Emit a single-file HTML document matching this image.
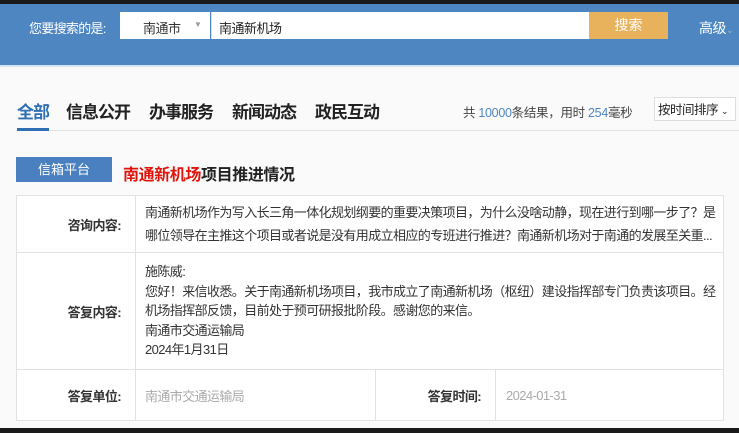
<html><head><style>
body{margin:0;width:739px;height:433px;overflow:hidden;background:#fafafa;font-family:"Liberation Sans","Noto Sans CJK SC",sans-serif;position:relative}
.a{position:absolute}
table{table-layout:fixed}
td{border:1px solid #e2e2e2;font-size:13px;letter-spacing:-0.6px;color:#333;box-sizing:border-box;overflow:hidden;white-space:nowrap}
</style></head><body>
<div class="a" style="left:0;top:0;width:739px;height:4px;background:#1a1a1a"></div>
<div class="a" style="left:0;top:4px;width:739px;height:61px;background:#4e86c2"></div>
<div class="a" style="left:29px;top:18px;color:#fff;font-size:13px;letter-spacing:-0.7px">您要搜索的是:</div>
<div class="a" style="left:120px;top:12px;width:90px;height:27px;background:#fff"></div>
<div class="a" style="left:143px;top:18px;font-size:13px;color:#333;letter-spacing:-0.5px">南通市</div>
<div class="a" style="left:194px;top:20px;font-size:8px;color:#999">▼</div>
<div class="a" style="left:211px;top:12px;width:378px;height:27px;background:#fff;border-left:1px solid #ddd"></div>
<div class="a" style="left:219px;top:18px;font-size:13px;color:#222;letter-spacing:-0.5px">南通新机场</div>
<div class="a" style="left:589px;top:12px;width:79px;height:27px;background:#e8b15c;color:#fff;font-size:14px;text-align:center;line-height:27px">搜索</div>
<div class="a" style="left:699px;top:18px;color:#fff;font-size:14px;letter-spacing:-0.5px">高级<span style="font-size:9px;color:#9bb">⌄</span></div>
<div class="a" style="left:0;top:65px;width:739px;height:2px;background:#d6e3f0"></div>
<div class="a" style="left:17px;top:98px;font-size:17px;font-weight:bold;color:#2f6fb3;letter-spacing:-1px">全部</div>
<div class="a" style="left:66px;top:98px;font-size:17px;font-weight:bold;color:#222;letter-spacing:-1px">信息公开</div>
<div class="a" style="left:149px;top:98px;font-size:17px;font-weight:bold;color:#222;letter-spacing:-1px">办事服务</div>
<div class="a" style="left:232px;top:98px;font-size:17px;font-weight:bold;color:#222;letter-spacing:-1px">新闻动态</div>
<div class="a" style="left:315px;top:98px;font-size:17px;font-weight:bold;color:#222;letter-spacing:-1px">政民互动</div>
<div class="a" style="left:17px;top:130px;width:722px;height:1px;background:#e4e4e4"></div>
<div class="a" style="left:17px;top:128px;width:32px;height:3px;background:#2f6fb3"></div>
<div class="a" style="left:463px;top:102px;font-size:12.5px;color:#444;letter-spacing:-0.3px">共 <span style="color:#4e86c2">10000</span>条结果，用时 <span style="color:#4e86c2">254</span>毫秒</div>
<div class="a" style="left:654px;top:97px;width:82px;height:24px;border:1px solid #ddd;background:#fff;font-size:12.5px;line-height:24px;color:#222;padding-left:3px;box-sizing:border-box;letter-spacing:-0.5px">按时间排序 <span style="font-size:9px">⌄</span></div>
<div class="a" style="left:16px;top:157px;width:96px;height:25px;background:#4a80c0;color:#fff;font-size:13px;text-align:center;line-height:25px">信箱平台</div>
<div class="a" style="left:123px;top:161px;font-size:16px;font-weight:bold;color:#222;letter-spacing:-0.4px"><span style="color:#e0140b">南通新机场</span>项目推进情况</div>
<table class="a" style="left:16px;top:195px;width:708px;border-collapse:collapse;background:#fff">
<colgroup><col style="width:119px"><col style="width:240px"><col style="width:120px"><col></colgroup>
<tr style="height:57px"><td style="text-align:right;font-weight:bold;padding-right:14px">咨询内容:</td><td colspan="3" style="padding:0 0 0 9px;line-height:23px">南通新机场作为写入长三角一体化规划纲要的重要决策项目，为什么没啥动静，现在进行到哪一步了？是<br>哪位领导在主推这个项目或者说是没有用成立相应的专班进行推进？南通新机场对于南通的发展至关重...</td></tr>
<tr style="height:117px"><td style="text-align:right;font-weight:bold;padding-right:14px">答复内容:</td><td colspan="3" style="padding:0 0 0 9px;line-height:19.5px">施陈威:<br>您好！来信收悉。关于南通新机场项目，我市成立了南通新机场（枢纽）建设指挥部专门负责该项目。经<br>机场指挥部反馈，目前处于预可研报批阶段。感谢您的来信。<br>南通市交通运输局<br>2024年1月31日</td></tr>
<tr style="height:51px"><td style="text-align:right;font-weight:bold;padding-right:14px">答复单位:</td><td style="padding:0 9px;color:#aaa">南通市交通运输局</td><td style="text-align:right;font-weight:bold;padding-right:14px">答复时间:</td><td style="padding:0 10px;color:#aaa">2024-01-31</td></tr>
</table>
<div class="a" style="left:0;top:428px;width:739px;height:5px;background:#1a1a1a"></div>
</body></html>
